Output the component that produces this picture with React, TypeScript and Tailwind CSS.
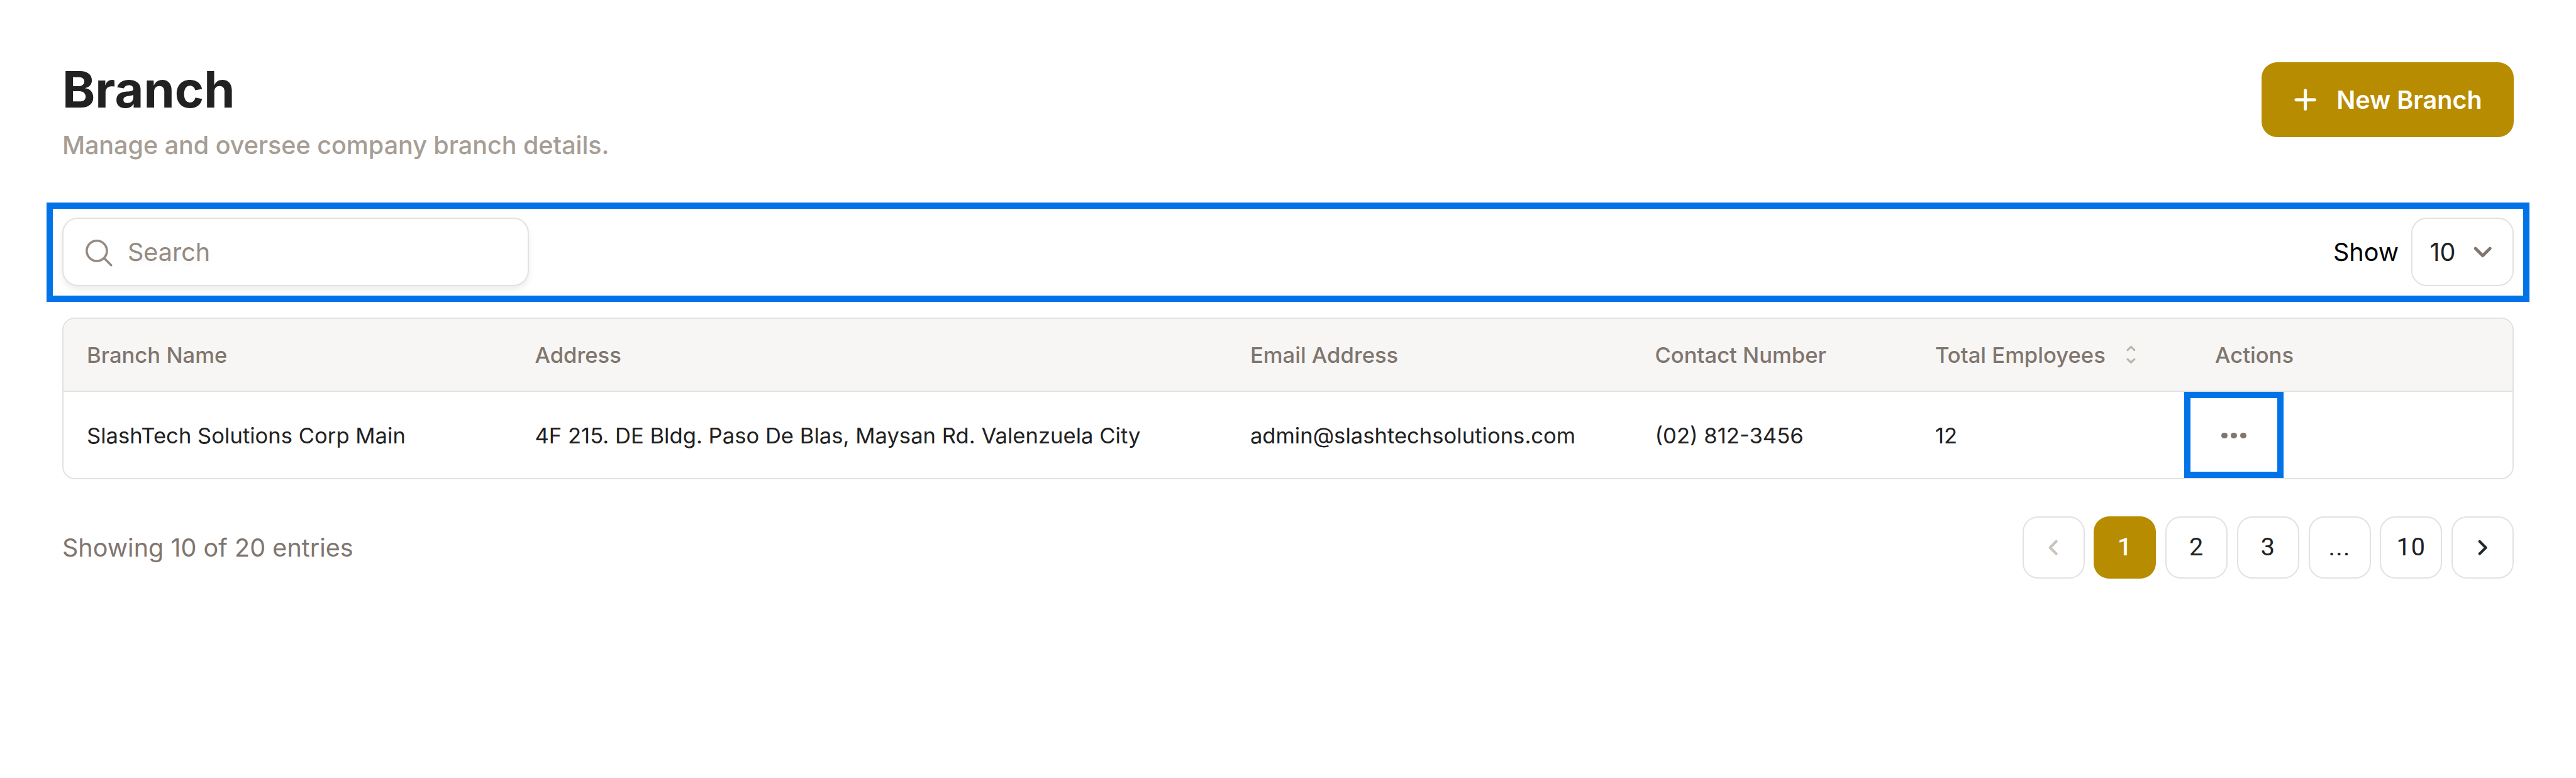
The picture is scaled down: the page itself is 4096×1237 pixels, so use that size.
import React from "react";

type GlyphProps = {
  viewBox: string;
  d: string;
  stroke: number;
  className: string;
};

function Glyph({ viewBox, d, stroke, className }: GlyphProps) {
  return (
    <svg
      viewBox={viewBox}
      fill="none"
      stroke="currentColor"
      strokeWidth={stroke}
      strokeLinecap="round"
      strokeLinejoin="round"
      className={"shrink-0 " + className}
    >
      <path d={d} />
    </svg>
  );
}

function PageButton({ children, active = false }: { children: React.ReactNode; active?: boolean }) {
  return (
    <button
      className={
        "flex h-[98.93px] w-[98.93px] items-center justify-center rounded-[24.7px] pb-[2px] font-['Roboto',sans-serif] text-[39.57px] leading-none tracking-[1.237px] " +
        (active ? "bg-[#b88c00] font-medium text-white" : "border-2 border-[#e2e2df] text-[#212121]")
      }
    >
      {children}
    </button>
  );
}

const COLS = "grid grid-cols-[712.5px_1137.5px_643.5px_445.5px_445px_1fr] items-center";

const HEADINGS = ["Branch Name", "Address", "Email Address", "Contact Number"];
const CELLS = [
  "SlashTech Solutions Corp Main",
  "4F 215. DE Bldg. Paso De Blas, Maysan Rd. Valenzuela City",
  "admin@slashtechsolutions.com",
  "(02) 812-3456",
  "12",
];

export default function App() {
  return (
    <div className="flex h-[1237px] w-[4096px] flex-col bg-white px-[98.93px] pt-[98.93px] font-['Inter',sans-serif] text-[#212121]">
      <header className="flex items-start justify-between">
        <div>
          <h1 className="text-[79.15px] leading-[86px] font-bold">Branch</h1>
          <p className="text-[39.57px] leading-[92px] font-medium tracking-[-0.06px] text-[#a69d95]">
            Manage and oversee company branch details.
          </p>
        </div>
        <button className="flex h-[118.7px] w-[400.7px] items-center gap-[19.8px] rounded-[24.7px] bg-[#b88c00] pl-[39.6px] text-[39.57px] font-semibold text-white">
          <Glyph viewBox="0 0 24 24" d="M6 12h12M12 6v12" stroke={2} className="size-[59.35px]" />
          <span className="pt-[2px]">New Branch</span>
        </button>
      </header>

      <section className="-mx-[24.73px] mt-[44.6px] flex h-[158.3px] shrink-0 items-center justify-between border-[10px] border-[#0073e8] px-[14.73px]">
        <div className="flex h-[108.8px] w-[742px] items-center gap-[17.5px] rounded-[24.7px] border-2 border-[#e2e2df] bg-white pl-[25.2px] text-[#948a82] shadow-[0_5px_10px_rgba(16,24,40,0.08)]">
          <Glyph
            viewBox="0 0 24 24"
            d="M17.8 11.25a6.5 6.5 0 1 1-13 0a6.5 6.5 0 0 1 13 0M15.95 15.85l4.6 4.65"
            stroke={1.45}
            className="size-[59.35px]"
          />
          <span className="pt-[2px] text-[39.57px] [text-shadow:0_5px_10px_rgba(16,24,40,0.05)]">Search</span>
        </div>
        <div className="flex items-center gap-[19.8px] text-[39.57px]">
          <span className="pt-[2px] text-black">Show</span>
          <div className="flex h-[108.8px] w-[163.2px] items-center justify-between rounded-[24.7px] border-2 border-[#e2e2df] pr-[22.7px] pl-[27.5px]">
            <span className="pt-[2px]">10</span>
            <Glyph viewBox="0 0 20 20" d="M5.33 7.7L10 12.35L14.67 7.7" stroke={2} className="size-[49.47px] text-[#80756f]" />
          </div>
        </div>
      </section>

      <section className="mt-[24.73px] shrink-0 overflow-hidden rounded-[19.8px] border-2 border-[#e2e2e1] text-[34.62px]">
        <div className={COLS + " h-[116.7px] border-b-2 border-[#e2e2df] bg-[#f7f6f4] pl-[37px] font-medium text-[#80756f]"}>
          {HEADINGS.map((heading) => (
            <span key={heading} className="pt-[2px]">
              {heading}
            </span>
          ))}
          <span className="flex items-center gap-[33px]">
            <span className="pt-[2px]">Total Employees</span>
            <Glyph
              viewBox="0 0 24 48"
              d="M3.3 12.3L12 3.6L20.7 12.3M3.3 35.7L12 44.4L20.7 35.7"
              stroke={5}
              className="h-[29.68px] w-[14.84px] text-[#bbb3ab]"
            />
          </span>
          <span className="pt-[2px]">Actions</span>
        </div>
        <div className={COLS + " h-[136.5px] pl-[37px]"}>
          {CELLS.map((cell) => (
            <span key={cell} className="pt-[2px]">
              {cell}
            </span>
          ))}
          <button className="-ml-[49.1px] flex h-[136.5px] w-[158.3px] items-center justify-center gap-[4.95px] border-[10px] border-[#0073e8] pt-[2px]">
            <span className="size-[9.9px] rounded-full bg-[#80756f]" />
            <span className="size-[9.9px] rounded-full bg-[#80756f]" />
            <span className="size-[9.9px] rounded-full bg-[#80756f]" />
          </button>
        </div>
      </section>

      <footer className="mt-[59.4px] flex items-center justify-between">
        <span className="pt-[2px] text-[39.57px] text-[#80756f]">Showing 10 of 20 entries</span>
        <nav className="flex gap-[14.84px]">
          <PageButton>
            <Glyph viewBox="0 0 24 24" d="M14 8L10 12L14 16" stroke={1.7} className="relative top-px size-[59.35px] text-[#c9c3bc]" />
          </PageButton>
          <PageButton active>1</PageButton>
          <PageButton>2</PageButton>
          <PageButton>3</PageButton>
          <PageButton>...</PageButton>
          <PageButton>10</PageButton>
          <PageButton>
            <Glyph viewBox="0 0 24 24" d="M10 8L14 12L10 16" stroke={1.7} className="relative top-px size-[59.35px] text-[#21282c]" />
          </PageButton>
        </nav>
      </footer>
    </div>
  );
}
